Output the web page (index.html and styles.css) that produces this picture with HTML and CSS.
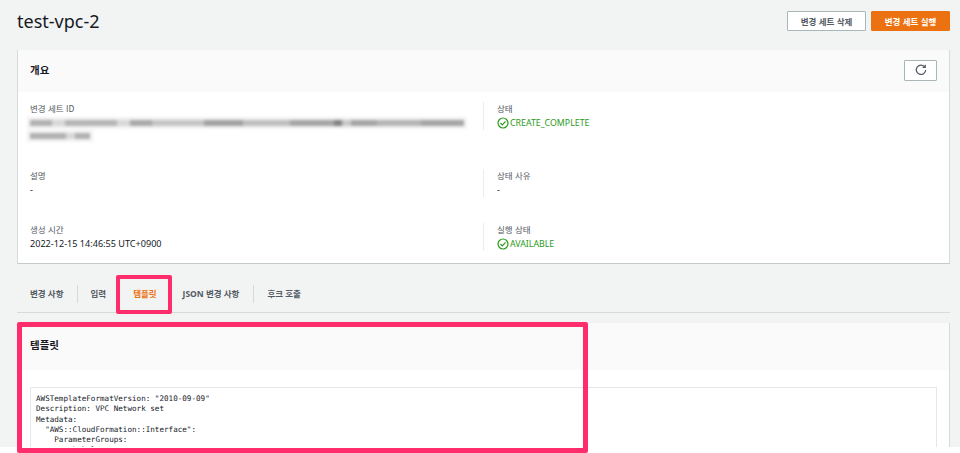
FILE: index.html
```html
<!DOCTYPE html>
<html lang="ko">
<head>
<meta charset="utf-8">
<title>test-vpc-2</title>
<link rel="stylesheet" href="styles.css">
</head>
<body>
<div class="page">
  <header class="top">
    <h1>test-vpc-2</h1>
    <div class="actions">
      <button class="btn">변경 세트 삭제</button>
      <button class="btn primary">변경 세트 실행</button>
    </div>
  </header>

  <section class="card summary">
    <div class="card-head">
      <h2>개요</h2>
      <button class="refresh" aria-label="새로 고침">
        <svg width="12" height="12" viewBox="0 0 12 12" fill="none" stroke="#545b64" stroke-width="1.3"><path d="M9.9 3.1A4.7 4.7 0 1 0 10.7 6"/><path d="M10.2 0.8V3.4H7.6"/></svg>
      </button>
    </div>
    <div class="details">
      <div class="col">
        <div class="field f1"><div class="label">변경 세트 ID</div><div class="redact r1"></div><div class="redact r2"></div></div>
        <div class="field f2"><div class="label">설명</div><div class="value">-</div></div>
        <div class="field"><div class="label">생성 시간</div><div class="value">2022-12-15 14:46:55 UTC+0900</div></div>
      </div>
      <div class="col right">
        <div class="field f1"><div class="label">상태</div><div class="status">
          <svg width="12" height="12" viewBox="0 0 12 12" fill="none" stroke="#2a9a1a" stroke-width="1.2"><circle cx="6" cy="6" r="5"/><path d="M3.5 6l1.8 1.8 3.2-3.4"/></svg>CREATE_COMPLETE</div></div>
        <div class="field f2"><div class="label">상태 사유</div><div class="value">-</div></div>
        <div class="field"><div class="label">실행 상태</div><div class="status">
          <svg width="12" height="12" viewBox="0 0 12 12" fill="none" stroke="#2a9a1a" stroke-width="1.2"><circle cx="6" cy="6" r="5"/><path d="M3.5 6l1.8 1.8 3.2-3.4"/></svg>AVAILABLE</div></div>
      </div>
    </div>
  </section>

  <nav class="tabs">
    <a class="tab sep">변경 사항</a>
    <a class="tab wide">입력</a>
    <a class="tab active">템플릿</a>
    <a class="tab sep wide">JSON 변경 사항</a>
    <a class="tab">후크 호출</a>
  </nav>

  <section class="card template">
    <div class="card-head tall"><h2>템플릿</h2></div>
    <div class="code-wrap">
<pre class="code">AWSTemplateFormatVersion: "2010-09-09"
Description: VPC Network set
Metadata:
  "AWS::CloudFormation::Interface":
    ParameterGroups:
      - Label:</pre>
    </div>
  </section>

  <div class="mark mark-tab"></div>
  <div class="mark mark-panel"></div>
</div>
</body>
</html>
```
FILE: styles.css
```css
* { box-sizing: border-box; }
html, body { margin: 0; background: #fff; height: 453px; overflow: hidden; }
body { font-family: "Noto Sans", "Noto Sans CJK KR", sans-serif; color: #16191f; }
.page { position: relative; height: 447px; background: #f2f3f3; padding: 0 10px 0 17px; }
.top { height: 50px; display: flex; justify-content: space-between; align-items: flex-start; }
h1 { margin: 9px 0 0; font-size: 18px; line-height: 25px; font-weight: 400; color: #16191f; }
.actions { display: flex; gap: 5px; margin-top: 11px; }
.btn { width: 79px; height: 20px; padding: 0; border: 1px solid #aab7b8; border-radius: 1px; background: #fff; color: #545b64; font: 700 8.5px/18px "Noto Sans CJK KR", sans-serif; }
.btn.primary { background: #ec7211; border-color: #ec7211; color: #fff; }
.card { background: #fff; border-right: 1px solid #d5dbdb; border-left: 1px solid #d5dbdb; }
.summary { height: 214px; border-bottom: 1px solid #c4caca; }
.card-head { height: 42px; padding: 0 12px 3px; background: #fafafa; display: flex; justify-content: space-between; align-items: center; }
.card-head.tall { height: 47px; }
h2 { margin: 0; font: 700 10.5px/14px "Noto Sans CJK KR", sans-serif; color: #16191f; }
.refresh { width: 33px; height: 21px; margin-top: 1px; padding: 0; background: #fff; border: 1px solid #aab7b8; border-radius: 1px; display: flex; align-items: center; justify-content: center; }
.details { display: grid; grid-template-columns: 453px 1fr; padding: 10px 0 0 12px; }
.col.right > .field { border-left: 1px solid #eaeded; padding-left: 13px; }
.field { height: 28px; }
.f1 { margin-bottom: 39px; }
.f2 { margin-bottom: 26px; }
.label { font: 400 8.5px/12px "Noto Sans CJK KR", sans-serif; color: #545b64; }
.value { margin-top: 2px; font-size: 9.1px; line-height: 14px; color: #16191f; }
.status { margin-top: 2px; display: flex; align-items: center; gap: 1px; font-size: 8.8px; line-height: 14px; color: #2a9a1a; }
.redact { filter: blur(1.8px); height: 6px; box-shadow: 0 0 0 3px rgba(215, 215, 215, 0.3); }
.r1 { margin-top: 6px; width: 434px; background: linear-gradient(90deg, #b0b0b0 0 5%, #d8d8d8 5% 8%, #b4b4b4 8% 20%, #d8d8d8 20% 23%, #a8a8a8 23% 28%, #c4c4c4 28% 40%, #a0a0a0 40% 49%, #bebebe 49% 60%, #a4a4a4 60% 70%, #808080 70% 72%, #c8c8c8 72% 74%, #a4a4a4 74% 80%, #b4b4b4 80% 90%, #a4a4a4 90% 100%); }
.r2 { margin-top: 7px; width: 60px; background: linear-gradient(90deg, #b0b0b0 0 60%, #d8d8d8 60% 75%, #b0b0b0 75% 100%); }
.tabs { height: 49px; padding-top: 21px; display: flex; align-items: flex-start; border-bottom: 1px solid #d5dbdb; }
.tab { height: 18px; font: 700 8.5px/13px "Noto Sans", "Noto Sans CJK KR", sans-serif; color: #545b64; padding: 2px 13px 0; white-space: nowrap; }
.tab.wide { padding-right: 14px; }
.tab.sep { border-right: 1px solid #d5dbdb; }
.tab.active { color: #ec7211; }
.template { margin-top: 10px; height: 124px; overflow: hidden; }
.code-wrap { padding: 17px 12px 0; }
.code { margin: 0; height: 80px; padding: 6px 5px; border: 1px solid #e6e8e8; background: #fff; font: 400 7.6px/10.3px "DejaVu Sans Mono", monospace; color: #16191f; overflow: hidden; }
.mark { position: absolute; border-style: solid; border-color: #ff2d6c; border-radius: 2px; }
.mark-tab { left: 116px; top: 275px; width: 56px; height: 39px; border-width: 4px; }
.mark-panel { left: 17px; top: 322px; width: 571px; height: 131px; border-width: 5px; }
```
